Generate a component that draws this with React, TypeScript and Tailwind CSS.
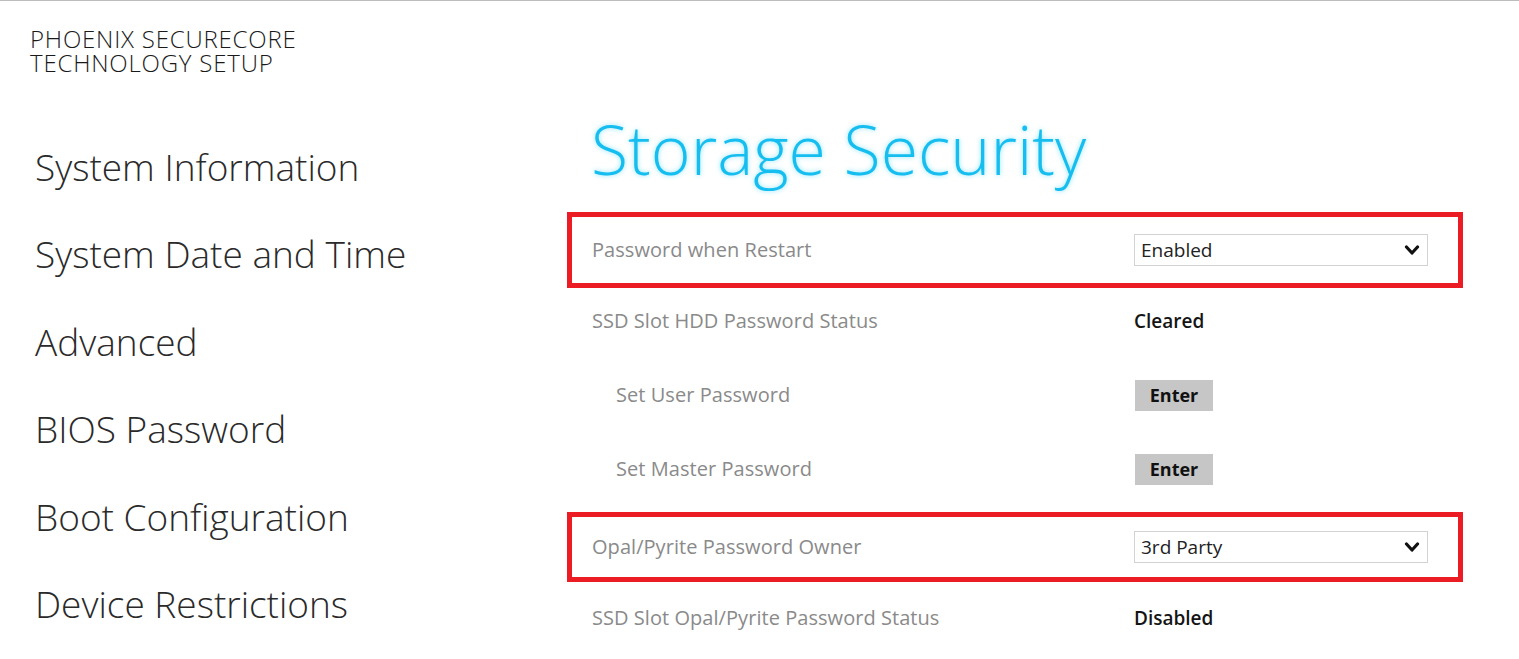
import React from "react";

const font = { fontFamily: '"Open Sans", "Noto Sans", sans-serif' };

function Chevron() {
  return (
    <svg width="16" height="11" viewBox="0 0 16 11" className="shrink-0">
      <polyline points="2.5,2 8,8 13.5,2" fill="none" stroke="#111" strokeWidth="3.2" strokeLinecap="round" strokeLinejoin="round" />
    </svg>
  );
}

function Select({ value }: { value: string }) {
  return (
    <div className="flex h-[32px] w-[294px] items-center justify-between border border-[#d2d2d2] pl-[6px] pr-[7px] text-[19px] text-[#222]">
      <span>{value}</span>
      <Chevron />
    </div>
  );
}

function EnterBtn() {
  return (
    <div className="ml-[1px] flex h-[31px] w-[78px] items-center justify-center bg-[#c6c6c6] text-[18px] font-bold text-[#111]">
      Enter
    </div>
  );
}

function Row({
  label,
  indent,
  boxed,
  h,
  children,
}: {
  label: string;
  indent?: boolean;
  boxed?: boolean;
  h: string;
  children: React.ReactNode;
}) {
  return (
    <div
      className={`flex items-center border-[5px] ${boxed ? "border-[#ec1c24]" : "border-transparent"} ${h}`}
    >
      <div
        className={`w-[562px] shrink-0 text-[20px] tracking-[0.05px] text-[#8a8a8a] ${indent ? "pl-[44px]" : "pl-[20px]"}`}
      >
        {label}
      </div>
      <div className="flex items-center">{children}</div>
    </div>
  );
}

export default function App() {
  const nav = [
    "System Information",
    "System Date and Time",
    "Advanced",
    "BIOS Password",
    "Boot Configuration",
    "Device Restrictions",
  ];
  return (
    <div style={font} className="flex h-[659px] w-[1519px] overflow-hidden border-t border-[#bcbcbc] bg-white">
      <div className="w-[567px] shrink-0 pl-[30px] pt-[26px]">
        <div className="flex flex-col gap-[1px] text-[24px] font-light uppercase leading-[23px] tracking-[0.8px] text-[#1a1a1a]">
          <div className="h-[23px] overflow-visible">PHOENIX SECURECORE</div>
          <div className="h-[23px] overflow-visible">TECHNOLOGY SETUP</div>
        </div>
        <div className="mt-[49px] pl-[5px]">
          {nav.map((n) => (
            <div key={n} className="h-[87.4px] text-[37px] font-light leading-[87.4px] text-[#2a2a2a]">
              {n}
            </div>
          ))}
        </div>
      </div>
      <div className="w-[896px] shrink-0 pt-[108px]">
        <div className="mb-[23px] h-[80px] pl-[24px] text-[68px] font-light leading-[80px] text-[#16bef0] [text-shadow:0_0_5px_rgba(130,225,255,0.9)]">
          Storage Security
        </div>
        <Row label="Password when Restart" boxed h="h-[76px]">
          <Select value="Enabled" />
        </Row>
        <Row label="SSD Slot HDD Password Status" h="h-[66px]">
          <span className="text-[19px] font-semibold text-[#151515]">Cleared</span>
        </Row>
        <Row label="Set User Password" indent h="h-[82px]">
          <EnterBtn />
        </Row>
        <Row label="Set Master Password" indent h="h-[66px]">
          <EnterBtn />
        </Row>
        <div className="mt-[10px]">
          <Row label="Opal/Pyrite Password Owner" boxed h="h-[70px]">
            <Select value="3rd Party" />
          </Row>
        </div>
        <Row label="SSD Slot Opal/Pyrite Password Status" h="h-[72px]">
          <span className="text-[19px] font-semibold text-[#151515]">Disabled</span>
        </Row>
      </div>
    </div>
  );
}
